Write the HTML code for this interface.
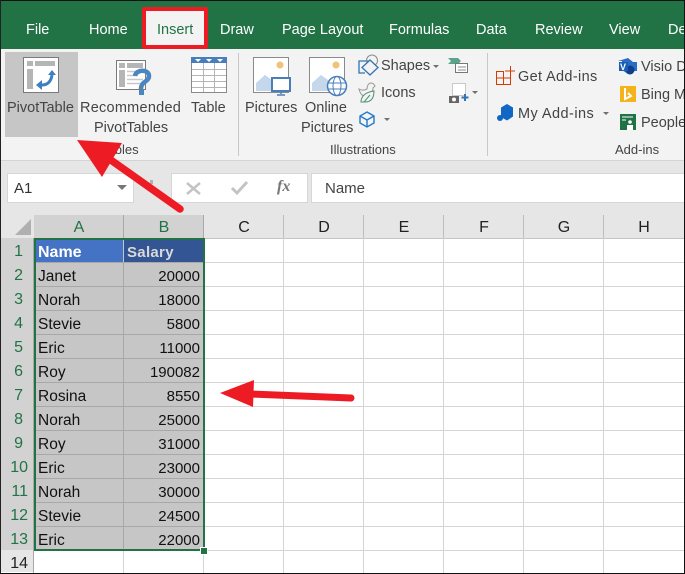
<!DOCTYPE html>
<html><head><meta charset="utf-8">
<style>
html,body{margin:0;padding:0;background:#fff}
#p{position:relative;width:685px;height:574px;overflow:hidden;background:#fff;font-family:"Liberation Sans",sans-serif;color:#000}
#p div{position:absolute;white-space:nowrap}
.t{font-size:14.5px;color:#fff;top:21px;line-height:18px}
.r{font-size:14.5px;color:#444;line-height:18px}
.g{font-size:13px;color:#444;line-height:16px;top:142px}
.hr{left:1px;text-align:right;font-size:16px;line-height:28px;height:24px;color:#217346}
.c{font-size:15px;line-height:28px;height:24px;color:#111}
.n{left:124px;width:76px;text-align:right}
.a{left:38px;font-size:15.5px}
.ch{top:215px;height:23px;line-height:26px;text-align:center;font-size:16px;color:#222;width:80px}
</style></head><body>
<div id="p">
<div style="left:0;top:0;width:685px;height:1px;background:#111"></div>
<div style="left:0;top:1px;width:685px;height:48px;background:#217346"></div>
<div style="left:0;top:49px;width:685px;height:111px;background:#f3f3f3"></div>
<div style="left:0;top:160px;width:685px;height:1px;background:#d4d4d4"></div>
<div style="left:0;top:161px;width:685px;height:54px;background:#e6e6e6"></div>

<div class="t" style="left:26px">File</div>
<div class="t" style="left:89px">Home</div>
<div style="left:142px;top:7px;width:66px;height:42px;box-sizing:border-box;border:4px solid #ed1c24;border-radius:2px;background:#f3f3f3"></div>
<div class="t" style="left:157px;color:#217346">Insert</div>
<div class="t" style="left:220px">Draw</div>
<div class="t" style="left:282px">Page Layout</div>
<div class="t" style="left:389px">Formulas</div>
<div class="t" style="left:476px">Data</div>
<div class="t" style="left:535px">Review</div>
<div class="t" style="left:609px">View</div>
<div class="t" style="left:668px">De</div>

<div style="left:5px;top:52px;width:73px;height:85px;background:#c6c6c6"></div>
<div style="left:238px;top:53px;width:1px;height:103px;background:#c8c8c8"></div>
<div style="left:487px;top:53px;width:1px;height:103px;background:#c8c8c8"></div>

<div class="r" style="left:7px;top:99px">PivotTable</div>
<div class="r" style="left:80px;top:99px;letter-spacing:.25px">Recommended</div>
<div class="r" style="left:94px;top:119px">PivotTables</div>
<div class="r" style="left:191px;top:99px">Table</div>
<div class="r" style="left:245px;top:99px">Pictures</div>
<div class="r" style="left:305px;top:99px">Online</div>
<div class="r" style="left:301px;top:119px">Pictures</div>
<div class="r" style="left:381px;top:57px">Shapes</div>
<div class="r" style="left:381px;top:84px">Icons</div>
<div class="r" style="left:518px;top:68px;letter-spacing:.35px">Get Add-ins</div>
<div class="r" style="left:518px;top:105px;letter-spacing:.45px">My Add-ins</div>
<div class="r" style="left:641px;top:58px">Visio D</div>
<div class="r" style="left:641px;top:86px">Bing M</div>
<div class="r" style="left:641px;top:114px">People</div>
<div class="g" style="left:101px">Tables</div>
<div class="g" style="left:330px">Illustrations</div>
<div class="g" style="left:615px">Add-ins</div>

<svg style="position:absolute;left:0;top:0" width="685" height="160" fill="none">
<!-- pivot -->
<rect x="23.500" y="57.500" width="35" height="35" fill="#fff" stroke="#7a7a7a"/>
<rect x="27" y="61" width="6" height="5" fill="#b5b5b5"/><rect x="35" y="61" width="20" height="5" fill="#b5b5b5"/><rect x="27" y="69" width="6" height="20" fill="#b5b5b5"/>
<path d="M42 85c5 0 9-3 10-10" stroke="#3f7fbf" stroke-width="3"/>
<path d="M36 85l6-5v10zM48 75l4-5 4 5z" fill="#3f7fbf"/>
<!-- recommended -->
<rect x="116.500" y="60.500" width="29" height="29" fill="#fff" stroke="#7a7a7a"/>
<rect x="119" y="63" width="6" height="5" fill="#b5b5b5"/><rect x="127" y="63" width="16" height="5" fill="#b5b5b5"/><rect x="119" y="70" width="6" height="17" fill="#b5b5b5"/>
<path d="M127 71.500h16M127 75.500h8M127 79.500h16M127 83.500h14" stroke="#c8c8c8" stroke-width="1.500"/>
<path d="M135 76c1-7 14-7 14 0 0 6-8 5-8 13" stroke="#4a86c0" stroke-width="4.500"/><rect x="139" y="90" width="5" height="5" fill="#4a86c0"/>
<!-- table -->
<rect x="191.500" y="57.500" width="35" height="35" fill="#fff" stroke="#8a8a8a"/>
<rect x="191" y="57" width="36" height="6" fill="#4a7ebb"/>
<path d="M192 69.500h34M192 75.500h34M192 81.500h34M192 87.500h34M203.500 63v29M214.500 63v29" stroke="#b5b5b5"/>
<path d="M195 59h6l-3 3zM206 59h6l-3 3zM217 59h6l-3 3z" fill="#fff"/>
<!-- pictures -->
<rect x="253.500" y="57.500" width="35" height="35" fill="#fff" stroke="#8a8a8a"/>
<circle cx="280" cy="65" r="3.500" fill="#f0c27a"/>
<path d="M256 91v-8l9-8 7 5v11z" fill="#c5d7ea"/>
<rect x="272" y="78" width="18" height="13" fill="#fff" stroke="#4a7ebb" stroke-width="2"/><path d="M281 91v3M277 95h8" stroke="#4a7ebb" stroke-width="1.500"/>
<rect x="309.500" y="57.500" width="35" height="35" fill="#fff" stroke="#8a8a8a"/>
<circle cx="336" cy="65" r="3.500" fill="#f0c27a"/>
<path d="M312 91v-8l9-8 7 5v11z" fill="#c5d7ea"/>
<circle cx="337" cy="86" r="9.500" fill="#fff" stroke="#4a7ebb" stroke-width="1.500"/><ellipse cx="337" cy="86" rx="4" ry="9.500" stroke="#4a7ebb"/><path d="M328 83h18M328 89h18" stroke="#4a7ebb"/>
<!-- shapes -->
<path d="M369 61h-10v12h6" stroke="#2e75b6" stroke-width="1.300"/>
<circle cx="372" cy="60.500" r="5.500" stroke="#8a8a8a"/>
<path d="M370 60l8 7.500-8 7.500-8-7.500z" fill="#f3f3f3" stroke="#2e75b6" stroke-width="1.300"/>
<path d="M433 65h6l-3 3zM384 118h6l-3 3zM472 91h6l-3 3zM603 112h6l-3 3z" fill="#707070"/>
<!-- icons -->
<path d="M359 89c3 2 6 1 8 0 0-4 2-6 4-6 3 0 3 2 4 3l-2 2c0 4-2 6-4 7l-4 1c-3 0-5-3-6-7z" stroke="#999" fill="#f3f3f3"/>
<path d="M361 102c0-6 5-10 13-11 0 7-3 11-9 11l-3 0zM364 102l6-7" stroke="#4f8e6c" fill="#f3f3f3"/>
<!-- cube -->
<path d="M367 112l7 4v7l-7 4-7-4v-7zM360 116l7 4 7-4M367 120v7" stroke="#2278c9" stroke-width="1.400"/>
<!-- small things -->
<path d="M448 58h10l3 3-3 3h-10l3-3z" fill="#5aa58a"/>
<rect x="455.500" y="63.500" width="12" height="9" fill="#fff" stroke="#777"/><path d="M458 67h8M458 70h8" stroke="#888"/>
<rect x="452.500" y="83.500" width="13" height="12" stroke="#999" stroke-dasharray="1 1" fill="#fff"/>
<rect x="449" y="96" width="10" height="7" fill="#666"/><circle cx="454" cy="99.500" r="2" fill="#fff"/>
<path d="M465 94v7M461.500 97.500h7" stroke="#2e75b6" stroke-width="2"/>
<!-- get add-ins -->
<path d="M504 71.500H496.500V84.500H510.500V76M496.500 78H510.500M503.500 71.500V84.500" stroke="#d83b01"/>
<path d="M510.500 66v10M505 71h10" stroke="#d83b01"/>
<!-- my add-ins -->
<path d="M507 104l6 3.500v9l-6 4-6-3.500v-9.500z" fill="#1266c4"/><circle cx="500" cy="118" r="3" fill="#1266c4"/>
<!-- visio -->
<path d="M628 58l5 4h4v9h-4l-5 3-6-4v-9h-4z" fill="#2b6cc4"/><circle cx="630" cy="70" r="4.500" fill="#0f3e8c"/>
<rect x="619" y="62" width="9" height="9" fill="#1a5fb4"/>
<text x="620" y="70" font-size="9" font-family="Liberation Sans" font-weight="bold" fill="#fff">V</text>
<rect x="620" y="86" width="16" height="16" fill="#f5b21a"/><path d="M625 88v11l6-3-3-3" stroke="#fff" stroke-width="2"/>
<rect x="620" y="114" width="16" height="16" fill="#217346"/><circle cx="630" cy="122" r="1.800" fill="#fff"/><path d="M627 130v-5h6v5z" fill="#fff"/><path d="M622 117h11M622 120h4" stroke="#fff"/>
</svg>

<!-- formula bar -->
<div style="left:7px;top:173px;width:127px;height:30px;box-sizing:border-box;background:#fff;border:1px solid #d6d6d6"></div>
<div style="left:14px;top:180px;font-size:15px;line-height:18px;color:#333">A1</div>
<div style="left:171px;top:173px;width:137px;height:30px;box-sizing:border-box;background:#fff;border:1px solid #d6d6d6"></div>
<div style="left:311px;top:173px;width:374px;height:30px;box-sizing:border-box;background:#fff;border:1px solid #d6d6d6"></div>
<div style="left:325px;top:180px;font-size:15px;line-height:18px;color:#444">Name</div>
<div style="left:277px;top:178px;font:italic bold 16px/18px 'Liberation Serif',serif;color:#777">fx</div>
<svg style="position:absolute;left:0;top:165px" width="310" height="50" fill="none">
<path d="M117 20h10l-5 5z" fill="#777"/>
<rect x="150" y="15" width="3" height="4" fill="#b0b0b0"/>
<path d="M187 18l13 11M200 18l-13 11" stroke="#c4c4c4" stroke-width="2.500"/>
<path d="M232 23l5 5 10-11" stroke="#c4c4c4" stroke-width="3"/>
</svg>

<!-- headers -->
<div style="left:1px;top:215px;width:33px;height:357px;background:#e6e6e6"></div>
<div style="left:1px;top:238px;width:33px;height:312px;background:#d2d2d2"></div>
<div style="left:34px;top:215px;width:651px;height:23px;background:#e6e6e6"></div>
<div style="left:34px;top:215px;width:170px;height:23px;background:#d2d2d2"></div>
<svg style="position:absolute;left:15px;top:219px" width="17" height="17"><path d="M16 0v16H0z" fill="#b0b0b0"/></svg>

<div class="ch" style="left:39px;color:#217346">A</div>
<div class="ch" style="left:124px;color:#217346">B</div>
<div class="ch" style="left:204px">C</div>
<div class="ch" style="left:284px">D</div>
<div class="ch" style="left:364px">E</div>
<div class="ch" style="left:444px">F</div>
<div class="ch" style="left:524px">G</div>
<div class="ch" style="left:604px">H</div>

<div style="left:123px;top:215px;width:1px;height:23px;background:#a8a8a8"></div>
<div style="left:203px;top:215px;width:1px;height:23px;background:#a8a8a8"></div>
<div style="left:283px;top:215px;width:1px;height:23px;background:#bdbdbd"></div>
<div style="left:363px;top:215px;width:1px;height:23px;background:#bdbdbd"></div>
<div style="left:443px;top:215px;width:1px;height:23px;background:#bdbdbd"></div>
<div style="left:523px;top:215px;width:1px;height:23px;background:#bdbdbd"></div>
<div style="left:603px;top:215px;width:1px;height:23px;background:#bdbdbd"></div>
<div style="left:204px;top:238px;width:481px;height:1px;background:#c4c4c4"></div>

<!-- grid -->
<svg style="position:absolute;left:0;top:238px" width="685" height="336" fill="none" stroke="#d4d4d4">
<path d="M204 24.500H685M204 48.500H685M204 72.500H685M204 96.500H685M204 120.500H685M204 144.500H685M204 168.500H685M204 192.500H685M204 216.500H685M204 240.500H685M204 264.500H685M204 288.500H685M204 312.500H685M34 312.500H204"/>
<path d="M283.500 0V335M363.500 0V335M443.500 0V335M523.500 0V335M603.500 0V335M123.500 312V335M203.500 312V335"/>
</svg>

<!-- selected data -->
<div style="left:34px;top:238px;width:170px;height:312px;background:#c6c6c6"></div>
<div style="left:36px;top:240px;width:87px;height:22px;background:#4472c4"></div>
<div style="left:124px;top:240px;width:79px;height:22px;background:#335593"></div>
<svg style="position:absolute;left:34px;top:238px" width="170" height="312" fill="none" stroke="#a8a8a8">
<path d="M0 48.500H170M0 72.500H170M0 96.500H170M0 120.500H170M0 144.500H170M0 168.500H170M0 192.500H170M0 216.500H170M0 240.500H170M0 264.500H170M0 288.500H170M0 24.500H170"/>
<path d="M89.500 24V312"/>
</svg>
<div style="left:34px;top:238px;width:171px;height:313px;box-sizing:border-box;border:2px solid #217346"></div>
<div style="left:200px;top:547px;width:6px;height:6px;background:#217346;border:1px solid #fff"></div>

<!-- row headers -->
<div style="left:33px;top:238px;width:1px;height:335px;background:#a8a8a8"></div>
<div class="hr" style="top:238px;width:22px">1</div>
<div class="hr" style="top:262px;width:22px">2</div>
<div class="hr" style="top:286px;width:22px">3</div>
<div class="hr" style="top:310px;width:22px">4</div>
<div class="hr" style="top:334px;width:22px">5</div>
<div class="hr" style="top:358px;width:22px">6</div>
<div class="hr" style="top:382px;width:22px">7</div>
<div class="hr" style="top:406px;width:22px">8</div>
<div class="hr" style="top:430px;width:22px">9</div>
<div class="hr" style="top:454px;width:27px">10</div>
<div class="hr" style="top:478px;width:27px">11</div>
<div class="hr" style="top:502px;width:27px">12</div>
<div class="hr" style="top:526px;width:27px">13</div>
<div class="hr" style="top:550px;width:27px;color:#222">14</div>

<!-- cells -->
<div class="c a" style="top:239px;color:#fff;font-weight:bold;font-size:16px">Name</div>
<div class="c" style="left:127px;top:239px;color:#d9d9d9;font-weight:bold;letter-spacing:.3px">Salary</div>
<div class="c a" style="top:263px">Janet</div><div class="c n" style="top:263px">20000</div>
<div class="c a" style="top:287px">Norah</div><div class="c n" style="top:287px">18000</div>
<div class="c a" style="top:311px">Stevie</div><div class="c n" style="top:311px">5800</div>
<div class="c a" style="top:335px">Eric</div><div class="c n" style="top:335px">11000</div>
<div class="c a" style="top:359px">Roy</div><div class="c n" style="top:359px">190082</div>
<div class="c a" style="top:383px">Rosina</div><div class="c n" style="top:383px">8550</div>
<div class="c a" style="top:407px">Norah</div><div class="c n" style="top:407px">25000</div>
<div class="c a" style="top:431px">Roy</div><div class="c n" style="top:431px">31000</div>
<div class="c a" style="top:455px">Eric</div><div class="c n" style="top:455px">23000</div>
<div class="c a" style="top:479px">Norah</div><div class="c n" style="top:479px">30000</div>
<div class="c a" style="top:503px">Stevie</div><div class="c n" style="top:503px">24500</div>
<div class="c a" style="top:527px">Eric</div><div class="c n" style="top:527px">22000</div>

<!-- frame edges -->
<div style="left:0;top:0;width:1px;height:574px;background:#222"></div>
<div style="left:684px;top:0;width:1px;height:574px;background:#111"></div>
<div style="left:0;top:573px;width:685px;height:1px;background:#111"></div>

<!-- arrows -->
<svg style="position:absolute;left:0;top:0" width="685" height="574" fill="none">
<path d="M77 140L122 143 102 177Z" fill="#ed1c24"/>
<path d="M108 158L180 209" stroke="#ed1c24" stroke-width="7.500" stroke-linecap="round"/>
<path d="M220 393L254 380 253 407Z" fill="#ed1c24"/>
<path d="M250 394L351 398" stroke="#ed1c24" stroke-width="7" stroke-linecap="round"/>
</svg>
</div>
</body></html>
